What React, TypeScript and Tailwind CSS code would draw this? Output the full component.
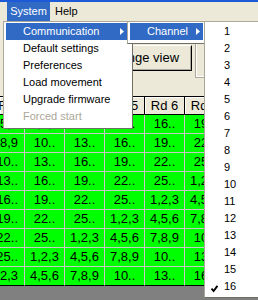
const SEQ = ["1,2,3", "4,5,6", "7,8,9", "10..", "13..", "16..", "19..", "22..", "25.."];
const COLS = [25, 40, 40, 40, 40, 40, 40];
const HEAD = ["Rd 2", "Rd 3", "Rd 4", "Rd 5", "Rd 6", "Rd 7", "Rd 8"];

function Arrow() {
  return (
    <svg width="4" height="7" viewBox="0 0 4 7" className="shrink-0">
      <polygon points="0,0 4,3.5 0,7" fill="#fff" />
    </svg>
  );
}

function Check() {
  return (
    <svg width="7" height="8" viewBox="0 0 7 8" className="shrink-0 mt-[5px]">
      <path d="M0.5 3.5 L2.6 6 L6.5 0.8" stroke="#000" strokeWidth="1.9" fill="none" />
    </svg>
  );
}

function MenuBox({ className, children }: { className: string; children: React.ReactNode }) {
  return (
    <div
      className={`absolute border border-t-[#aca899] border-l-[#aca899] border-r-[#716f64] border-b-[#716f64] bg-white ${className}`}
    >
      <div className="h-full border border-white px-px">{children}</div>
    </div>
  );
}

export default function App() {
  return (
    <div className="relative w-[258px] h-[300px] overflow-hidden bg-[#ece9d8] flex flex-col font-['Liberation_Sans',Arial,sans-serif] text-black">
      <div className="h-[2px] bg-[#1c5ad8]" />

      {/* menu bar */}
      <div className="h-[19px] flex items-stretch text-[11px]">
        <div className="ml-[7px] w-[43px] flex items-center justify-center bg-[#316ac5] text-white">System</div>
        <div className="pl-[5px] pr-[6px] flex items-center">Help</div>
      </div>

      {/* toolbar area */}
      <div className="h-[75px] flex items-start">
        <div className="ml-[91px] mt-[24px] w-[101px] h-[26px] border border-t-white border-l-white border-r-black border-b-black">
          <div className="h-full flex items-center justify-center border border-transparent border-r-[#aca899] border-b-[#aca899] text-[13px]">
            Change view
          </div>
        </div>
        <div className="ml-[3px] mt-[9px] h-[48px] flex-1 border-l border-b border-[#aca899] shadow-[inset_1px_-1px_0_#fff]" />
      </div>

      {/* grid */}
      <div className="flex flex-col text-[13px]">
        <div className="flex h-[19px] border-t border-b border-black">
          {COLS.map((w, i) => (
            <div
              key={i}
              style={{ width: w }}
              className="shrink-0 flex items-center justify-center overflow-hidden whitespace-nowrap border-r border-black shadow-[inset_1px_1px_0_#fff]"
            >
              {HEAD[i]}
            </div>
          ))}
        </div>
        {Array.from({ length: 9 }, (_, r) => (
          <div key={r} className="flex h-[19px]">
            {COLS.map((w, c) => (
              <div
                key={c}
                style={{ width: w }}
                className={`shrink-0 flex items-center overflow-hidden whitespace-nowrap bg-[#00ff00] border-r border-b border-r-[#c8c8c8] ${
                  r === 8 ? "border-b-black" : "border-b-[#c8c8c8]"
                } ${c === 0 ? "justify-end pr-[6px]" : "justify-center"}`}
              >
                {SEQ[(r + c + 1) % 9]}
              </div>
            ))}
          </div>
        ))}
      </div>
      <div className="flex-1 bg-[#808080]" />

      {/* System menu */}
      <MenuBox className="left-[3px] top-[21px] w-[130px] h-[108px]">
        <div className="text-[11px]">
          <div className="h-[17px] flex items-center justify-between pl-[17px] pr-[6px] bg-[#316ac5] text-white">
            <span>Communication</span>
            <Arrow />
          </div>
          <div className="h-[17px] flex items-center pl-[17px]">Default settings</div>
          <div className="h-[17px] flex items-center pl-[17px]">Preferences</div>
          <div className="h-[17px] flex items-center pl-[17px]">Load movement</div>
          <div className="h-[17px] flex items-center pl-[17px]">Upgrade firmware</div>
          <div className="h-[17px] flex items-center pl-[17px] text-[#aca899]">Forced start</div>
        </div>
      </MenuBox>

      {/* Communication submenu */}
      <MenuBox className="left-[127px] top-[21px] w-[79px] h-[23px]">
        <div className="h-[17px] flex items-center justify-between pl-[17px] pr-[3px] bg-[#316ac5] text-white text-[11px]">
          <span>Channel</span>
          <Arrow />
        </div>
      </MenuBox>

      {/* Channel submenu */}
      <MenuBox className="left-[204px] top-[21px] w-[70px] h-[277px]">
        <div className="text-[11px]">
          {Array.from({ length: 16 }, (_, i) =>
            i === 15 ? (
              <div key={i} className="h-[17px] flex items-center pl-[4px]">
                <Check />
                <span className="ml-[6px]">{i + 1}</span>
              </div>
            ) : (
              <div key={i} className="h-[17px] flex items-center pl-[17px]">
                {i + 1}
              </div>
            )
          )}
        </div>
      </MenuBox>
    </div>
  );
}
